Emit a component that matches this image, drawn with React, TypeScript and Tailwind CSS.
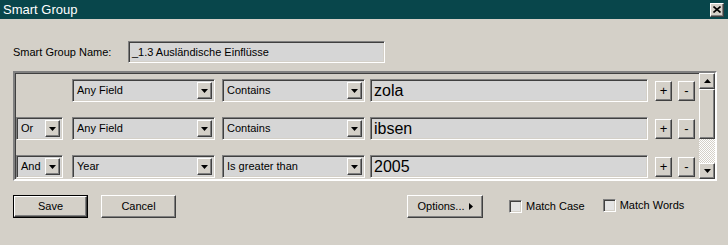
import React from "react";

const raised =
  "border border-t-white border-l-white border-b-[#404040] border-r-[#404040] shadow-[inset_-1px_-1px_#808080] bg-[#d4d0c8]";
const sunken =
  "border border-t-[#808080] border-l-[#808080] border-b-white border-r-white shadow-[inset_1px_1px_#404040,inset_-1px_-1px_#d4d0c8]";

function DownArrow() {
  return (
    <svg width="7" height="4" viewBox="0 0 7 4">
      <path d="M0 0h7L3.5 4z" fill="#000" />
    </svg>
  );
}

function Select({ w, text }: { w: string; text: string }) {
  return (
    <div className={`${sunken} ${w} h-[23px] bg-[#d6d6d6] flex items-center p-[2px]`}>
      <span className="flex-1 pl-[2px] text-[11px] text-black leading-none whitespace-nowrap overflow-hidden">
        {text}
      </span>
      <div className={`${raised} w-[15px] h-[17px] flex items-center justify-center shrink-0`}>
        <DownArrow />
      </div>
    </div>
  );
}

function SmallBtn({ label }: { label: string }) {
  return (
    <div className={`${raised} w-[17px] h-[20px] flex items-center justify-center text-[13px] leading-none text-black`}>
      {label}
    </div>
  );
}

function Row({ conn, field, cond, value }: { conn?: string; field: string; cond: string; value: string }) {
  return (
    <div className="flex items-center h-[23px]">
      <div className="w-[47px] ml-[1px]">
        {conn ? <Select w="w-[47px]" text={conn} /> : null}
      </div>
      <div className="ml-[9px]">
        <Select w="w-[143px]" text={field} />
      </div>
      <div className="ml-[7px]">
        <Select w="w-[143px]" text={cond} />
      </div>
      <div className={`${sunken} ml-[5px] w-[278px] h-[23px] bg-[#d6d6d6] flex items-center pl-[3px]`}>
        <span className="text-[16px] leading-none text-black">{value}</span>
      </div>
      <div className="ml-[7px]">
        <SmallBtn label="+" />
      </div>
      <div className="ml-[6px]">
        <SmallBtn label="-" />
      </div>
    </div>
  );
}

export default function App() {
  return (
    <div
      className="w-[728px] h-[245px] bg-[#d4d0c8] flex flex-col overflow-hidden text-[11px] text-black"
      style={{ fontFamily: '"Liberation Sans", Arial, sans-serif' }}
    >
      {/* Title bar */}
      <div className="h-[19px] bg-[#08464b] flex items-center justify-between pl-[3px] pr-[4px]">
        <span className="text-white text-[13px] leading-none">Smart Group</span>
        <div className={`${raised} w-[14px] h-[14px] flex items-center justify-center`}>
          <svg width="8" height="7" viewBox="0 0 8 7">
            <path d="M0.5 0.5L7.5 6.5M7.5 0.5L0.5 6.5" stroke="#000" strokeWidth="1.6" />
          </svg>
        </div>
      </div>

      {/* Name row */}
      <div className="flex items-center mt-[22px] pl-[13px]">
        <span className="w-[115px] text-[11px]">Smart Group Name:</span>
        <div className={`${sunken} w-[257px] h-[22px] bg-[#d6d6d6] flex items-center pl-[3px]`}>
          <span className="text-[11px] leading-none">_1.3 Ausländische Einflüsse</span>
        </div>
      </div>

      {/* Criteria panel */}
      <div
        className="mt-[8px] ml-[13px] w-[704px] h-[110px] border-2 border-t-[#808080] border-l-[#808080] border-b-white border-r-white shadow-[inset_1px_1px_#404040] flex"
      >
        <div className="flex-1 flex flex-col gap-[15px] pt-[6px]">
          <Row field="Any Field" cond="Contains" value="zola" />
          <Row conn="Or" field="Any Field" cond="Contains" value="ibsen" />
          <Row conn="And" field="Year" cond="Is greater than" value="2005" />
        </div>
        <div className="w-[16px] flex flex-col">
          <div className={`${raised} h-[16px] flex items-center justify-center`}>
            <svg width="7" height="4" viewBox="0 0 7 4">
              <path d="M0 4h7L3.5 0z" fill="#000" />
            </svg>
          </div>
          <div className={`${raised} h-[50px]`} />
          <div className="flex-1 bg-[repeating-conic-gradient(#ffffff_0%_25%,#d4d0c8_0%_50%)] bg-[length:2px_2px]" />
          <div className={`${raised} h-[16px] flex items-center justify-center`}>
            <DownArrow />
          </div>
        </div>
      </div>

      {/* Bottom row */}
      <div className="flex items-center mt-[14px] pl-[13px]">
        <div className="w-[75px] h-[23px] border border-black">
          <div className={`${raised} w-full h-full flex items-center justify-center`}>Save</div>
        </div>
        <div className={`${raised} ml-[13px] w-[75px] h-[23px] flex items-center justify-center`}>Cancel</div>
        <div className={`${raised} ml-[231px] w-[76px] h-[23px] flex items-center justify-center gap-[4px]`}>
          <span>Options...</span>
          <svg width="4" height="7" viewBox="0 0 4 7">
            <path d="M0 0v7l4-3.5z" fill="#000" />
          </svg>
        </div>
        <div className={`${sunken} ml-[26px] w-[13px] h-[13px] bg-[#e4e4e4]`} />
        <span className="ml-[4px]">Match Case</span>
        <div className={`${sunken} ml-[18px] w-[13px] h-[13px] bg-[#e4e4e4] -mt-[2px]`} />
        <span className="ml-[4px] -mt-[2px]">Match Words</span>
      </div>
    </div>
  );
}
